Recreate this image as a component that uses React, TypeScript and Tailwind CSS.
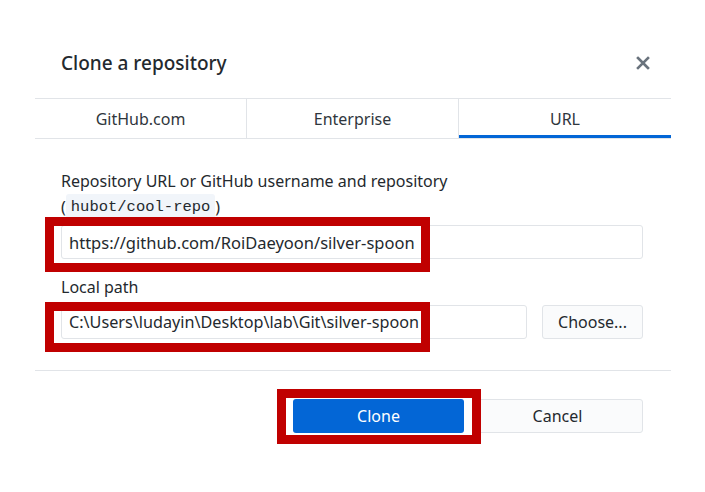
import React from "react";

{/* --- CLONE DIALOG --- */}
export default function App() {
    return (
        <div className="w-[705px] h-[492px] bg-white pt-[28px] font-['Noto_Sans',sans-serif] text-[#24292e]">
            <div className="ml-[35px] w-[636px]">
                {/* header */}
                <div className="h-[70px] flex items-center justify-between pl-[26px] pr-[21px]">
                    <h1 className="text-[19px] font-medium">Clone a repository</h1>
                    <svg width="14" height="14" viewBox="0 0 14 14" className="text-[#6a737d]">
                        <path d="M2 2 L12 12 M12 2 L2 12" stroke="currentColor" strokeWidth="2.6" strokeLinecap="square" />
                    </svg>
                </div>

                {/* tabs */}
                <div className="grid grid-cols-3 h-[41px] border-y border-[#e1e4e8] text-[16px] text-[#2f363d]">
                    <div className="flex items-center justify-center border-r border-[#e1e4e8]">GitHub.com</div>
                    <div className="flex items-center justify-center border-r border-[#e1e4e8]">Enterprise</div>
                    <div className="flex items-center justify-center shadow-[inset_0_-3px_0_#0366d6]">URL</div>
                </div>

                {/* form */}
                <div className="pl-[26px] pr-[28px] pt-[30px] pb-[31px] border-b border-[#e1e4e8] text-[16px]">
                    <p className="leading-[24px]">Repository URL or GitHub username and repository</p>
                    <p className="h-[24px] mt-[2px] flex items-center">
                        (<code className="bg-[#f1f5fa] px-[5px] leading-[26px] rounded-[3px] font-['Liberation_Mono',monospace] text-[15.5px]">hubot/cool-repo</code>)
                    </p>

                    <div className="relative mt-[6px]">
                        <input readOnly value="https://github.com/RoiDaeyoon/silver-spoon"
                            className="w-full h-[34px] border border-[#e1e4e8] rounded-[3px] pl-[7px] text-[16.5px] outline-none" />
                        <div className="absolute -left-4 -top-2 w-[385px] h-[55px] border-[9px] border-[#c00000] pointer-events-none" />
                    </div>

                    <p className="leading-[24px] mt-[16px]">Local path</p>
                    <div className="flex gap-[15px] mt-[6px]">
                        <div className="relative flex-1">
                            <input readOnly value="C:\Users\ludayin\Desktop\lab\Git\silver-spoon"
                                className="w-full h-[34px] border border-[#e1e4e8] rounded-[3px] pl-[7px] text-[16.2px] outline-none" />
                            <div className="absolute -left-4 -top-[3px] w-[385px] h-[50px] border-[9px] border-[#c00000] pointer-events-none" />
                        </div>
                        <button className="w-[101px] h-[34px] bg-[#fafbfc] border border-[#e1e4e8] rounded-[3px]">Choose...</button>
                    </div>
                </div>

                {/* footer */}
                <div className="flex justify-end gap-[8px] pt-[28px] pr-[28px] text-[16px]">
                    <div className="relative">
                        <button className="w-[171px] h-[34px] bg-[#0366d6] text-white rounded-[3px]">Clone</button>
                        <div className="absolute -left-4 -top-[10px] w-[204px] h-[55px] border-[9px] border-[#c00000] pointer-events-none" />
                    </div>
                    <button className="w-[171px] h-[34px] bg-[#fafbfc] border border-[#e1e4e8] rounded-[3px]">Cancel</button>
                </div>
            </div>
        </div>
    );
}
